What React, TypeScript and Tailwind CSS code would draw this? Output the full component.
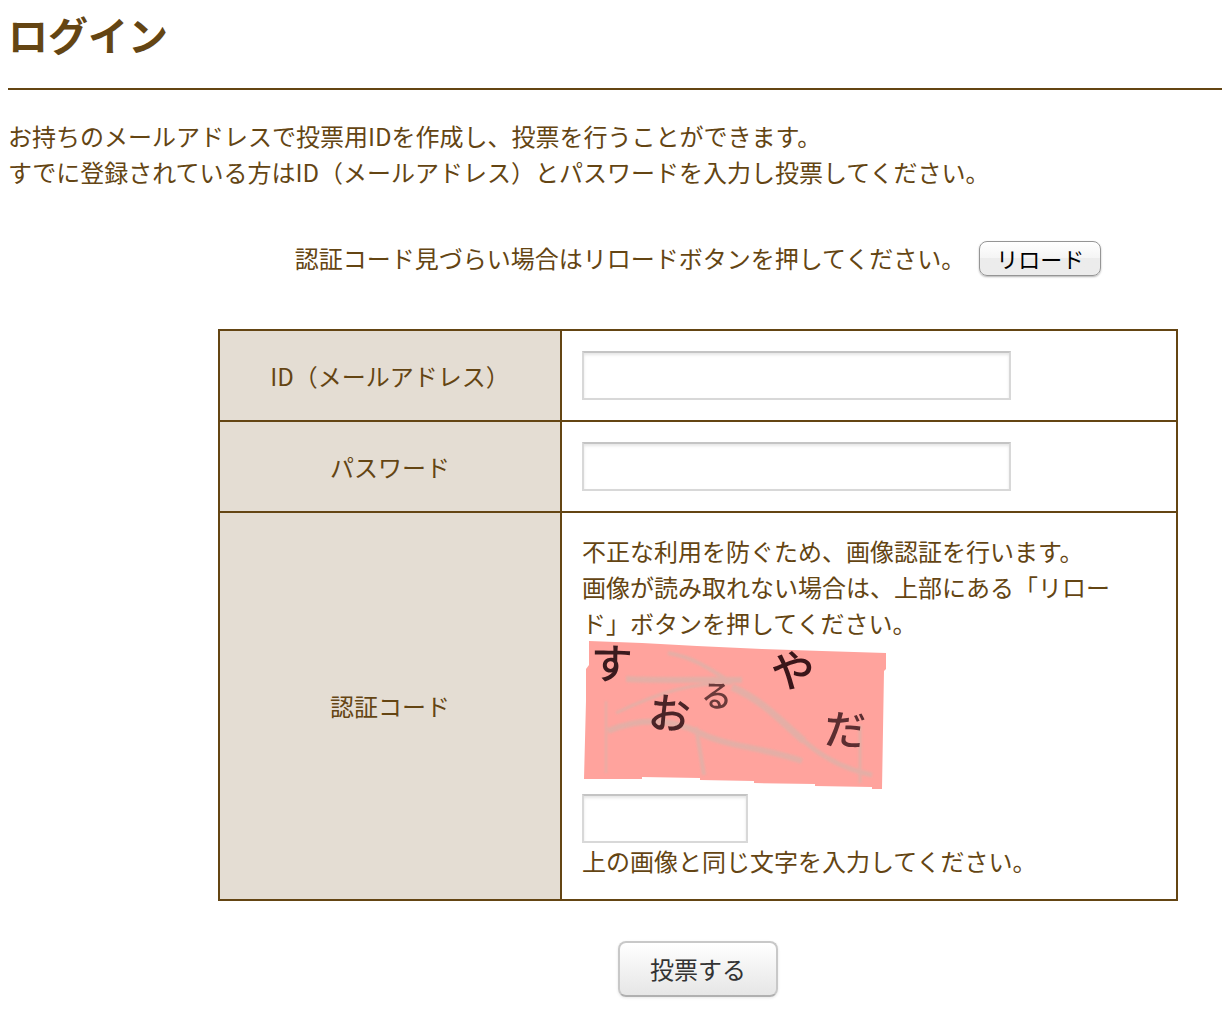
import type { InputHTMLAttributes, ReactNode } from 'react'

function TextField({ className, ...props }: InputHTMLAttributes<HTMLInputElement>) {
  return (
    <input
      {...props}
      className={`block h-[49px] border-2 border-[#d8d8d8] border-t-[#c4c4c4] bg-white px-2 text-black shadow-[inset_0_2px_3px_rgba(0,0,0,0.1)] outline-none ${className}`}
    />
  )
}

function Row({ label, htmlFor, children }: { label: string; htmlFor: string; children: ReactNode }) {
  return (
    <tr>
      <th scope="row" className="w-[342px] border-2 border-[#644513] bg-[#e4ddd3] p-5 text-center align-middle font-normal">
        <label htmlFor={htmlFor}>{label}</label>
      </th>
      <td className="border-2 border-[#644513] p-5">{children}</td>
    </tr>
  )
}

const glyphs = [
  { ch: 'す', x: 29, y: 38, size: 42, rotate: 2, fill: '#3a1a1e' },
  { ch: 'お', x: 86, y: 88, size: 42, rotate: 6, fill: '#4b2427' },
  { ch: 'る', x: 134, y: 66, size: 31, rotate: 3, fill: '#6a3a3a' },
  { ch: 'や', x: 210, y: 46, size: 44, rotate: 2, fill: '#3a1519' },
  { ch: 'だ', x: 262, y: 104, size: 41, rotate: 4, fill: '#5c2e31' },
]

function Captcha() {
  return (
    <svg viewBox="0 0 306 153" role="img" aria-label="画像認証" className="block h-[153px] w-[306px] overflow-visible">
      <path
        d="M7 0L60 2L115 5L180 8L240 10L304 12V28L302 30L300 148H290V146L233 145V143L172 142V140L118 139V137L60 136V138H2L4 60V28L7 24Z"
        fill="#ffa39d"
      />
      <g fill="none" stroke="#d6b5ab" strokeWidth="4" opacity="0.65" className="blur-[1px]">
        <path d="M44 38C90 40 120 38 160 39" strokeWidth="6" />
        <path d="M86 12C110 16 125 26 150 42" />
        <path d="M150 46C185 62 200 82 222 100" strokeWidth="7" />
        <path d="M222 100C240 116 262 128 290 134" strokeWidth="5" />
        <path d="M34 72C80 50 110 42 150 42" strokeWidth="3" />
        <path d="M26 90C60 76 90 78 118 92S180 106 220 120" strokeWidth="6" />
        <path d="M114 86Q118 110 122 134" />
        <path d="M24 60V132" strokeWidth="2" />
        <path d="M278 84V142" strokeWidth="3" />
      </g>
      <g textAnchor="middle" fontWeight="500" className="blur-[0.5px]">
        {glyphs.map((g) => (
          <text key={g.ch} x={g.x} y={g.y} fontSize={g.size} fill={g.fill} transform={`rotate(${g.rotate} ${g.x} ${g.y})`}>
            {g.ch}
          </text>
        ))}
      </g>
    </svg>
  )
}

export default function App() {
  return (
    <main
      lang="ja"
      className="bg-white pb-4 pl-2 font-['Noto_Sans_CJK_JP',sans-serif] text-[24px] leading-9 text-[#644513]"
    >
      <h1 className="border-b-2 border-[#644513] pt-1 pb-6 text-[40px] leading-[60px] font-bold">ログイン</h1>
      <p className="mt-7">
        お持ちのメールアドレスで投票用IDを作成し、投票を行うことができます。
        <br />
        すでに登録されている方はID（メールアドレス）とパスワードを入力し投票してください。
      </p>
      <form className="mt-[50px] flex flex-col items-center pr-11 pl-[210px]" onSubmit={(e) => e.preventDefault()}>
        <div className="flex items-center gap-[14px]">
          <p>認証コード見づらい場合はリロードボタンを押してください。</p>
          <button
            type="button"
            className="flex h-[35px] w-[122px] items-center justify-center rounded-lg border border-[#959595] bg-linear-to-b from-white from-0% via-[#f4f4f4] via-50% to-[#ececec] to-50% text-[22px] text-black shadow-[0_1px_2px_rgba(0,0,0,0.3)]"
          >
            リロード
          </button>
        </div>
        <table className="mt-[53px] w-full table-fixed border-collapse">
          <tbody>
            <Row label="ID（メールアドレス）" htmlFor="mail">
              <TextField id="mail" type="text" className="w-[429px]" />
            </Row>
            <Row label="パスワード" htmlFor="password">
              <TextField id="password" type="password" className="w-[429px]" />
            </Row>
            <Row label="認証コード" htmlFor="code">
              <p className="pr-8">
                不正な利用を防ぐため、画像認証を行います。
                <br />
                画像が読み取れない場合は、上部にある「リロード」ボタンを押してください。
              </p>
              <Captcha />
              <TextField id="code" type="text" className="w-[166px]" />
              <p>上の画像と同じ文字を入力してください。</p>
            </Row>
          </tbody>
        </table>
        <button
          type="submit"
          className="mt-10 h-14 w-40 rounded-lg border-2 border-[#c8c8c8] border-b-[#b0b0b0] bg-linear-to-b from-white to-[#e6e6e6] text-[#333333] shadow-[0_1px_3px_rgba(0,0,0,0.1)]"
        >
          投票する
        </button>
      </form>
    </main>
  )
}
